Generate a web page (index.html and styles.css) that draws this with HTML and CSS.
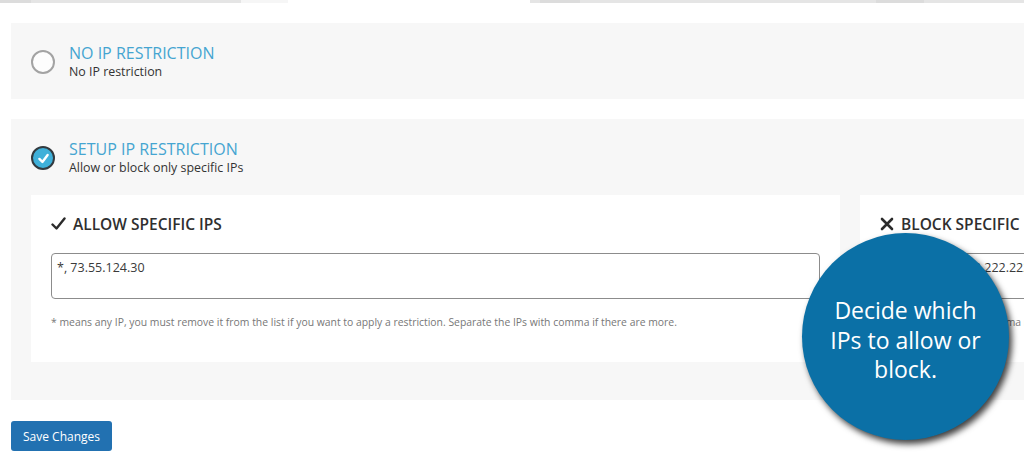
FILE: index.html
```html
<!DOCTYPE html>
<html lang="en">
<head>
  <meta charset="UTF-8">
  <meta name="viewport" content="width=device-width, initial-scale=1.0">
  <link rel="stylesheet" href="styles.css">
  <title>IP Restriction</title>
</head>
<body>

<!-- tabs cut off at the top -->
<div class="top-strip">
  <span class="seg dark" style="width:31px"></span>
  <span class="seg mid" style="width:210px"></span>
  <span class="seg pale" style="width:47px"></span>
  <span class="seg white" style="width:242px"></span>
  <span class="seg mid" style="width:10px"></span>
  <span class="seg dark" style="width:40px"></span>
  <span class="seg mid" style="width:296px"></span>
  <span class="seg dark" style="width:48px"></span>
  <span class="seg mid" style="width:100px"></span>
</div>

<div class="page">

  <div class="option">
    <div class="option-head">
      <span class="radio"></span>
      <div>
        <div class="option-title">NO IP RESTRICTION</div>
        <div class="option-desc">No IP restriction</div>
      </div>
    </div>
  </div>

  <div class="option option-open">
    <div class="option-head">
      <span class="radio checked">
        <svg width="13" height="13" viewBox="0 0 12 12"><path d="M2.2 6.4 L5 9.2 L9.8 2.8" fill="none" stroke="#fff" stroke-width="2.2" stroke-linecap="round" stroke-linejoin="round"/></svg>
      </span>
      <div>
        <div class="option-title">SETUP IP RESTRICTION</div>
        <div class="option-desc">Allow or block only specific IPs</div>
      </div>
    </div>

    <div class="lists">
      <div class="list-card">
        <h3 class="list-title">
          <svg width="15" height="14" viewBox="0 0 15 14"><path d="M1.5 7.5 L5.5 11.5 L13.5 1.5" fill="none" stroke="#2b2b2b" stroke-width="2.4" stroke-linecap="round" stroke-linejoin="round"/></svg>
          ALLOW SPECIFIC IPS
        </h3>
        <textarea class="ip-box">*, 73.55.124.30</textarea>
        <p class="hint">* means any IP, you must remove it from the list if you want to apply a restriction. Separate the IPs with comma if there are more.</p>
      </div>
      <div class="list-card">
        <h3 class="list-title">
          <svg width="14" height="14" viewBox="0 0 14 14"><path d="M2 2 L12 12 M12 2 L2 12" fill="none" stroke="#2b2b2b" stroke-width="2.6" stroke-linecap="round"/></svg>
          BLOCK SPECIFIC IPS
        </h3>
        <textarea class="ip-box">10.20.30.40, 222.222.222.222</textarea>
        <p class="hint">Separate the IPs with comma if there are more.</p>
      </div>
    </div>
  </div>

  <button class="save-btn">Save Changes</button>
</div>

<!-- callout bubble -->
<div class="callout">Decide which IPs to allow or block.</div>

</body>
</html>
```

FILE: styles.css
```css
body {
  margin: 0;
  width: 1024px;
  height: 456px;
  overflow: hidden;
  background: #ffffff;
  font-family: 'Open Sans', 'Noto Sans', sans-serif;
  color: #333;
  position: relative;
}

.top-strip {
  display: flex;
  height: 3px;
  width: 1024px;
}

.seg {
  display: block;
  height: 3px;
  flex-shrink: 0;
}

.seg.dark { background: #dcdcdc; }
.seg.mid { background: #e5e5e5; }
.seg.pale { background: #f6f6f6; }
.seg.white { background: #ffffff; }

.page {
  width: 1700px;
  padding: 20px 0 0 11px;
}

.option {
  background: #f7f7f7;
  padding: 21px 20px 19px 20px;
  margin-bottom: 20px;
}

.option-open {
  padding-bottom: 38px;
}

.option-head {
  display: flex;
  align-items: center;
  gap: 14px;
}

.radio {
  width: 20px;
  height: 20px;
  border: 2px solid #a3a3a3;
  border-radius: 50%;
  background: #fdfdfd;
  display: flex;
  align-items: center;
  justify-content: center;
  flex-shrink: 0;
}

.radio.checked {
  border-color: #333a3f;
  background: #3fb0d9;
}

.option-title {
  font-size: 16px;
  font-weight: 500;
  color: #45a5d1;
  line-height: 19px;
}

.option-desc {
  font-size: 12.4px;
  line-height: 17px;
  color: #333;
}

.lists {
  display: flex;
  gap: 20px;
  margin-top: 19px;
}

.list-card {
  background: #ffffff;
  width: 769px;
  padding: 18px 20px 20px;
  flex-shrink: 0;
}

.list-title {
  margin: 0;
  font-size: 15.5px;
  font-weight: 600;
  line-height: 22px;
  color: #2f2f2f;
  display: flex;
  align-items: center;
  gap: 7px;
}

.ip-box {
  display: block;
  box-sizing: border-box;
  width: 769px;
  height: 46px;
  margin-top: 18px;
  padding: 5px 5px;
  border: 1px solid #8c8c8c;
  border-radius: 4px;
  font-family: 'Open Sans', sans-serif;
  font-size: 12.5px;
  color: #3a3a3a;
  resize: none;
}

.hint {
  margin: 16px 0 0;
  font-size: 10.4px;
  color: #777;
  line-height: 14px;
  padding-bottom: 13px;
}

.save-btn {
  margin-top: 1px;
  background: #2271b1;
  color: #fff;
  border: none;
  border-radius: 3px;
  width: 101px;
  height: 30px;
  font-family: 'Open Sans', sans-serif;
  font-size: 12px;
  padding: 0;
  cursor: pointer;
}

/* Callout bubble */
.callout {
  position: absolute;
  left: 802px;
  top: 233px;
  width: 207px;
  height: 207px;
  border-radius: 50%;
  background: #0b70a6;
  box-shadow: 3px 4px 6px rgba(0, 0, 0, 0.75);
  color: #fff;
  font-size: 23px;
  line-height: 29.5px;
  text-align: center;
  display: flex;
  align-items: center;
  justify-content: center;
  padding: 8px 24px 0;
  box-sizing: border-box;
}
```
